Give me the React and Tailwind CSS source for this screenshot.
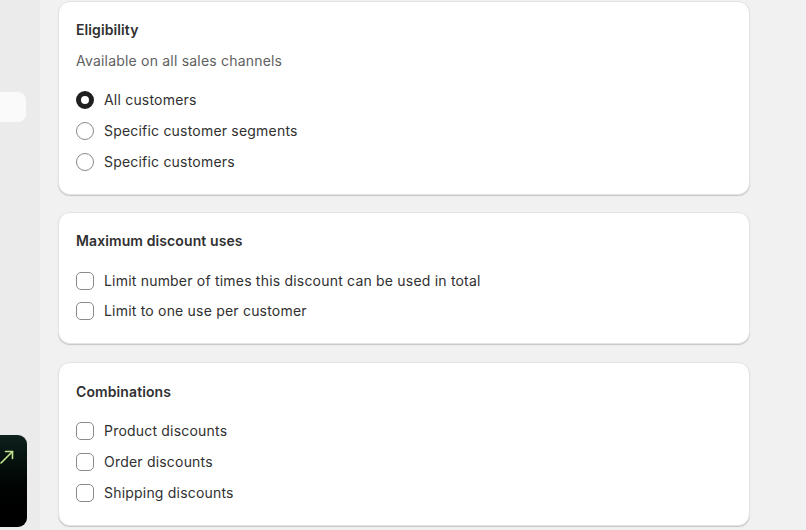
import React from "react";

function Radio({ checked }) {
  return checked ? (
    <span className="box-border inline-block h-[18px] w-[18px] shrink-0 rounded-full border-[5px] border-[#1f1f1f] bg-white" />
  ) : (
    <span className="box-border inline-block h-[18px] w-[18px] shrink-0 rounded-full border border-[#8a8a8a] bg-white" />
  );
}

function Checkbox() {
  return <span className="box-border inline-block h-[18px] w-[18px] shrink-0 rounded-[5px] border border-[#8a8a8a] bg-white" />;
}

function Row({ control, label, h = "h-[31px]" }) {
  return (
    <div className={"flex items-center gap-[10px] " + h}>
      {control}
      <span className="text-[14px] leading-[20px] tracking-[0.2px] text-[#303030]">{label}</span>
    </div>
  );
}

function Card({ children, className = "" }) {
  return (
    <div className={"w-[692px] rounded-[12px] border border-[#e3e3e3] bg-white px-[17px] pb-[17px] pt-[18px] shadow-[0_1px_1px_rgba(0,0,0,0.18)] " + className}>
      {children}
    </div>
  );
}

function Title({ children }) {
  return <div className="text-[14px] font-semibold leading-[20px] tracking-[0.1px] text-[#303030]">{children}</div>;
}

export default function App() {
  return (
    <div
      className="flex h-[530px] w-[806px] overflow-hidden bg-[#f1f1f1]"
      style={{ fontFamily: "Inter, 'Noto Sans', sans-serif" }}
    >
      <div className="flex w-[40px] shrink-0 flex-col bg-[#ebebeb]">
        <div className="mt-[92px] h-[30px] w-[26px] rounded-r-[8px] bg-[#fafafa]" />
        <div className="mt-[313px] flex h-[92px] w-[27px] rounded-r-[9px] bg-gradient-to-b from-[#0e211c] to-[#000000] pt-[15px]">
          <svg width="14" height="14" viewBox="0 0 14 14" fill="none" stroke="#c3e58c" strokeWidth="1.6" strokeLinecap="round" strokeLinejoin="round">
            <path d="M1 13 L12.5 1.5" />
            <path d="M5.5 1.5 H12.5 V8.5" />
          </svg>
        </div>
      </div>
      <div className="flex flex-col gap-[17px] pl-[18px] pt-[1px]">
        <Card>
          <Title>Eligibility</Title>
          <div className="mt-[11px] text-[14px] leading-[20px] tracking-[0.2px] text-[#616161]">Available on all sales channels</div>
          <div className="mt-[13px] flex flex-col">
            <Row control={<Radio checked />} label="All customers" />
            <Row control={<Radio />} label="Specific customer segments" />
            <Row control={<Radio />} label="Specific customers" />
          </div>
        </Card>
        <Card>
          <Title>Maximum discount uses</Title>
          <div className="mt-[15px] flex flex-col">
            <Row h="h-[30px]" control={<Checkbox />} label="Limit number of times this discount can be used in total" />
            <Row h="h-[30px]" control={<Checkbox />} label="Limit to one use per customer" />
          </div>
        </Card>
        <Card className="mt-[1px] pt-[19px]">
          <Title>Combinations</Title>
          <div className="mt-[13px] flex flex-col">
            <Row control={<Checkbox />} label="Product discounts" />
            <Row control={<Checkbox />} label="Order discounts" />
            <Row control={<Checkbox />} label="Shipping discounts" />
          </div>
        </Card>
      </div>
    </div>
  );
}
